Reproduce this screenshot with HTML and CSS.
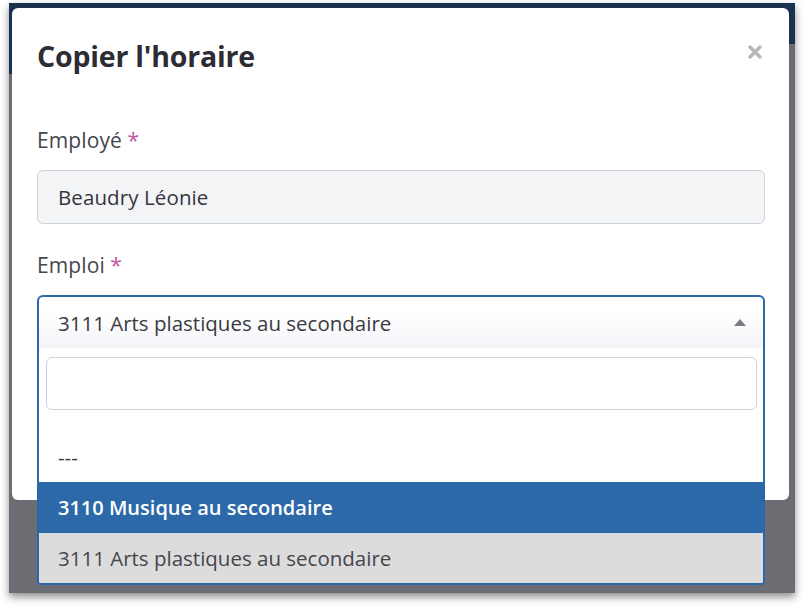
FILE: index.html
```html
<!DOCTYPE html>
<html lang="fr">
<head>
<meta charset="utf-8">
<title>Copier l'horaire</title>
<link rel="stylesheet" href="styles.css">
</head>
<body>
<div class="frame">
  <div class="page-header"></div>
  <div class="page-side"></div>
  <div class="modal">
    <div class="modal-header">
      <h2 class="modal-title">Copier l'horaire</h2>
      <svg class="close" width="14" height="14" viewBox="0 0 14 14" aria-label="Fermer">
        <path d="M2 2 L12 12 M12 2 L2 12" stroke="#b6b7ba" stroke-width="3.4" stroke-linecap="round"/>
      </svg>
    </div>
    <div class="modal-body">
      <div class="form-group">
        <label class="label">Employé <span class="req">*</span></label>
        <div class="input readonly">Beaudry Léonie</div>
      </div>
      <div class="form-group">
        <label class="label">Emploi <span class="req">*</span></label>
        <div class="select open">
          <span class="select-value">3111 Arts plastiques au secondaire</span>
          <span class="caret"></span>
          <div class="dropdown">
            <div class="search-wrap"><div class="search"></div></div>
            <ul class="options">
              <li class="option">---</li>
              <li class="option active">3110 Musique au secondaire</li>
              <li class="option selected">3111 Arts plastiques au secondaire</li>
            </ul>
          </div>
        </div>
      </div>
    </div>
  </div>
</div>
</body>
</html>
```
FILE: styles.css
```css
* { box-sizing: border-box; }
html, body { margin: 0; padding: 0; background: #ffffff; }
body {
  font-family: "Open Sans", "Noto Sans", sans-serif;
  height: 609px;
  padding-top: 3px;
}

.frame {
  position: relative;
  margin-left: 9px;
  width: 786px;
  height: 590px;
  background: #6c6d72;
  box-shadow: 0 4px 8px rgba(0, 0, 0, 0.45);
  overflow: hidden;
}
.page-header { height: 41px; background: #1b3150; }
.page-side { width: 3px; height: 30px; background: #1b3150; }

.modal {
  position: absolute;
  left: 3px;
  top: 5px;
  width: 777px;
  height: 492px;
  background: #ffffff;
  border-radius: 6px;
}
.modal-header {
  display: flex;
  justify-content: space-between;
  align-items: center;
  padding: 30px 27px 0 25px;
}
.modal-title {
  margin: 0;
  font-size: 28.5px;
  line-height: 36px;
  font-weight: 700;
  color: #2c2c34;
  letter-spacing: -0.2px;
}
.close { display: block; margin-top: -8px; }
.modal-body { padding: 55px 24px 0 25px; }
.form-group { margin-bottom: 30px; }
.label {
  display: block;
  font-size: 21px;
  line-height: 22px;
  color: #45454c;
  margin-bottom: 19px;
  letter-spacing: 0.1px;
}
.req { color: #c2559d; }
.input {
  height: 54px;
  border: 1px solid #cfd2d8;
  border-radius: 6px;
  padding: 0 20px;
  display: flex;
  align-items: center;
  font-size: 20.5px;
  letter-spacing: 0.1px;
  color: #35353c;
}
.input.readonly { background: #f3f4f6; }

.select {
  position: relative;
  height: 53px;
  border: 2px solid #2c68a9;
  border-bottom: none;
  border-radius: 6px 6px 0 0;
  background: linear-gradient(#ffffff 30%, #f3f4f7);
  display: flex;
  align-items: center;
  padding: 0 17px 0 19px;
  font-size: 20.5px;
  color: #3a3a41;
}
.select-value { flex: 1; }
.caret {
  width: 0;
  height: 0;
  border-left: 6px solid transparent;
  border-right: 6px solid transparent;
  border-bottom: 7px solid #7a7d86;
}
.dropdown {
  position: absolute;
  top: 51px;
  left: -2px;
  right: -2px;
  background: #ffffff;
  border: 2px solid #2c68a9;
  border-top: none;
  border-radius: 0 0 4px 4px;
  overflow: hidden;
}
.search-wrap { padding: 9px 6px 21px 7px; }
.search {
  height: 53px;
  border: 1px solid #cdd1da;
  border-radius: 6px;
  background: #ffffff;
}
.options { list-style: none; margin: 0; padding: 0; }
.option {
  height: 51px;
  display: flex;
  align-items: center;
  padding: 0 19px;
  font-size: 20.5px;
  color: #3a3a41;
}
.option.active { background: #2d69a8; color: #ffffff; font-weight: 600; font-size: 20px; }
.option.selected { background: #dcdcdc; color: #45454c; height: 50px; }
```
